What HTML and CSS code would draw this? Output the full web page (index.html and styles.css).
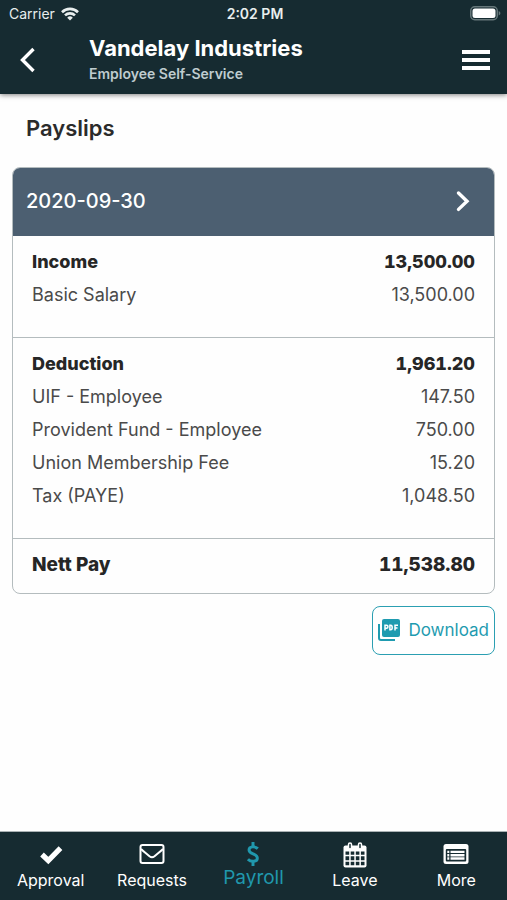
FILE: index.html
```html
<!DOCTYPE html>
<html lang="en">
<head>
<meta charset="UTF-8">
<meta name="viewport" content="width=device-width, initial-scale=1.0">
<title>Payslips</title>
<link rel="stylesheet" href="styles.css">
</head>
<body>

<header class="top">
  <div class="status-bar">
    <span class="carrier">
      Carrier
      <svg width="18" height="14" viewBox="0 0 18 14" fill="none" stroke="currentColor" stroke-width="2.6">
        <path d="M1 5.2a11.4 11.4 0 0 1 16 0"/>
        <path d="M4 8.4a7.2 7.2 0 0 1 10 0"/>
        <path d="M9 13.6 6.2 10.7a4 4 0 0 1 5.6 0z" fill="currentColor" stroke="none"/>
      </svg>
    </span>
    <span class="clock">2:02 PM</span>
    <span class="battery">
      <svg width="31" height="15" viewBox="0 0 31 15">
        <rect x="0.75" y="0.75" width="26.5" height="13" rx="4" fill="none" stroke="#66777a" stroke-width="1.5"/>
        <rect x="2.5" y="2.5" width="23" height="9.5" rx="2.5" fill="#fff"/>
        <path d="M28.7 5c2.2.8 2.2 3.7 0 4.5z" fill="#66777a"/>
      </svg>
    </span>
  </div>
  <div class="title-bar">
    <button class="icon-button" aria-label="Back">
      <svg width="16" height="26" viewBox="0 0 16 26" fill="none" stroke="currentColor" stroke-width="3.4">
        <path d="M13.5 2 2.5 13l11 11"/>
      </svg>
    </button>
    <div class="titles">
      <h1>Vandelay Industries</h1>
      <p>Employee Self-Service</p>
    </div>
    <button class="icon-button" aria-label="Menu">
      <svg width="30" height="20" viewBox="0 0 30 20" fill="currentColor">
        <path d="M1 0h28v4H1zM1 8h28v4H1zM1 16h28v4H1z"/>
      </svg>
    </button>
  </div>
</header>

<main>
  <h2>Payslips</h2>

  <section class="payslip">
    <button class="payslip-date">
      <span>2020-09-30</span>
      <svg width="14" height="22" viewBox="0 0 14 22" fill="none" stroke="currentColor" stroke-width="3.4" stroke-linecap="round">
        <path d="M2.5 3 11 11.2l-8.5 8.2"/>
      </svg>
    </button>
    <table>
      <tbody>
        <tr class="total"><th scope="row">Income</th><td>13,500.00</td></tr>
        <tr><th scope="row">Basic Salary</th><td>13,500.00</td></tr>
      </tbody>
      <tbody>
        <tr class="total"><th scope="row">Deduction</th><td>1,961.20</td></tr>
        <tr><th scope="row">UIF - Employee</th><td>147.50</td></tr>
        <tr><th scope="row">Provident Fund - Employee</th><td>750.00</td></tr>
        <tr><th scope="row">Union Membership Fee</th><td>15.20</td></tr>
        <tr><th scope="row">Tax (PAYE)</th><td>1,048.50</td></tr>
      </tbody>
      <tfoot>
        <tr class="total"><th scope="row">Nett Pay</th><td>11,538.80</td></tr>
      </tfoot>
    </table>
  </section>

  <button class="download">
    <svg width="22" height="22" viewBox="0 0 22 22">
      <path d="M1 5v14a2 2 0 0 0 2 2h14" fill="none" stroke="currentColor" stroke-width="2"/>
      <rect x="4" y="0" width="18" height="18" rx="2" fill="currentColor"/>
      <path d="M7 11.5V6.300h1.500a1.400 1.400 0 0 1 0 2.900H7M11.900 6.300v4.500h.8c2 0 2-4.500 0-4.500zM17 11.500V6.300h3M17 8.900h2.500" fill="none" stroke="#fff" stroke-width="1.5"/>
    </svg>
    Download
  </button>
</main>

<nav class="tabs">
  <a href="#approval">
    <svg width="24" height="24" viewBox="0 0 24 24" fill="none" stroke="currentColor" stroke-width="5.2">
      <path d="M3 12.5l6.3 6L21.5 6.2"/>
    </svg>
    Approval
  </a>
  <a href="#requests">
    <svg width="26" height="24" viewBox="0 0 26 24" fill="none" stroke="currentColor" stroke-width="2">
      <rect x="1.5" y="3" width="23" height="18" rx="2"/>
      <path d="M2 7c3 3 6 5 8.5 7.2 1.8 1.4 3.2 1.4 5 0C18 12 21 10 24 7"/>
    </svg>
    Requests
  </a>
  <a href="#payroll" class="active">
    <svg width="24" height="24" viewBox="0 0 24 26" fill="none" stroke="currentColor" stroke-width="3.2">
      <path d="M12 0v5M12 21v5"/>
      <path d="M17.2 7.2C14.5 4.5 7.7 4.3 7.7 8.7c0 5 9 3.300 9 8.600 0 4.700-7.200 4.500-10.200 1.400"/>
    </svg>
    Payroll
  </a>
  <a href="#leave">
    <svg width="24" height="26" viewBox="0 0 24 26">
      <rect x="0.5" y="3.5" width="23" height="22" rx="2" fill="currentColor"/>
      <path d="M2.5 9.5h3.7v3.3H2.5zM7.7 9.5h3.6v3.3H7.7zM12.8 9.5h3.6v3.3h-3.6zM17.9 9.5h3.6v3.3h-3.6zM2.5 14.2h3.7v4H2.5zM7.7 14.2h3.6v4H7.7zM12.8 14.2h3.6v4h-3.6zM17.9 14.2h3.6v4h-3.6zM2.5 19.7h3.7v3.6H2.5zM7.7 19.7h3.6v3.6H7.7zM12.8 19.7h3.6v3.6h-3.6zM17.9 19.7h3.6v3.6h-3.6z" fill="#162b31"/>
      <g fill="#162b31" stroke="currentColor" stroke-width="1.5">
        <rect x="5.5" y="1" width="3" height="6" rx="1.5"/>
        <rect x="15.5" y="1" width="3" height="6" rx="1.5"/>
      </g>
    </svg>
    Leave
  </a>
  <a href="#more">
    <svg width="26" height="24" viewBox="0 0 26 24">
      <rect x="0.5" y="2" width="25" height="20" rx="2.5" fill="currentColor"/>
      <rect x="2.8" y="7" width="20.4" height="12.5" rx="1" fill="#162b31"/>
      <path d="M4.3 8.7h2v2.4h-2zM7.5 8.7h14v2.4h-14zM4.3 12h2v2.4h-2zM7.5 12h14v2.4h-14zM4.3 15.3h2v2.4h-2zM7.5 15.3h14v2.4h-14z" fill="currentColor"/>
    </svg>
    More
  </a>
</nav>

</body>
</html>
```

FILE: styles.css
```css
* {
  box-sizing: border-box;
}

body {
  font-family: Inter, "Liberation Sans", sans-serif;
  margin: 0;
  min-height: 100vh;
  display: flex;
  flex-direction: column;
  background-color: #fefefe;
  color: #2b2b2b;
}

h1, h2, p {
  margin: 0;
}

button {
  font-family: inherit;
  cursor: pointer;
}

svg {
  display: block;
  flex-shrink: 0;
}

.top {
  background-color: #162b31;
  color: white;
  padding-bottom: 2px;
  box-shadow: 0 1px 5px rgba(0, 0, 0, 0.5);
}

.status-bar {
  display: grid;
  grid-template-columns: 1fr auto 1fr;
  align-items: center;
  height: 27px;
  padding: 0 6px 0 9px;
  font-size: 14px;
  color: #e8eeee;
}

.carrier {
  display: flex;
  align-items: center;
  gap: 6px;
}

.clock {
  font-weight: 600;
}

.battery {
  justify-self: end;
}

.title-bar {
  display: flex;
  align-items: center;
  height: 65px;
  padding: 0 16px 0 20px;
}

.icon-button {
  border: none;
  background: none;
  padding: 0;
  color: white;
}

.titles {
  flex: 1;
  margin-left: 53px;
}

.titles h1 {
  font-size: 22px;
  line-height: 28px;
  font-weight: 700;
}

.titles p {
  font-size: 14px;
  line-height: 24px;
  font-weight: 600;
  color: #bfcccf;
}

main {
  flex: 1;
  display: flex;
  flex-direction: column;
  padding: 20px 12px;
}

h2 {
  font-size: 22px;
  line-height: 28px;
  font-weight: 600;
  padding-left: 14px;
  margin-bottom: 25px;
}

.payslip {
  border: 1px solid #b4bcbe;
  border-radius: 8px;
  overflow: hidden;
}

.payslip-date {
  display: flex;
  align-items: center;
  justify-content: space-between;
  width: 100%;
  height: 68px;
  padding: 0 24px 2px 13px;
  border: none;
  background-color: #4c5f71;
  color: white;
  font-size: 20px;
  font-weight: 500;
}

table {
  width: 100%;
  border-collapse: collapse;
  font-size: 18px;
  line-height: 33px;
  color: #4a4a4a;
}

tbody {
  border-bottom: 1px solid #b4bcbe;
}

th, td {
  padding: 0 19px;
  font-weight: 400;
}

th {
  text-align: left;
}

td {
  text-align: right;
}

.total th, .total td {
  padding-top: 9px;
  font-weight: 800;
  color: #262626;
}

.total td {
  font-variant-numeric: tabular-nums;
}

tbody tr:last-child th, tbody tr:last-child td {
  padding-bottom: 26px;
}

tfoot {
  font-size: 19px;
}

tfoot th, tfoot td {
  padding-bottom: 12px;
}

.download {
  display: flex;
  align-items: center;
  align-self: flex-end;
  gap: 8px;
  height: 49px;
  margin-top: 12px;
  padding: 0 5px 2px;
  border: 1px solid #2b9fb2;
  border-radius: 8px;
  background-color: white;
  color: #1f9bb0;
  font-size: 17px;
}

.tabs {
  display: grid;
  grid-template-columns: repeat(5, 1fr);
  height: 69px;
  border-top: 1px solid #aab2b4;
  background-color: #162b31;
}

.tabs a {
  display: flex;
  flex-direction: column;
  align-items: center;
  justify-content: space-between;
  padding: 10px 0;
  font-size: 16px;
  line-height: 20px;
  color: white;
  text-decoration: none;
}

.tabs .active {
  padding-bottom: 12px;
  font-size: 19px;
  color: #2098ad;
}
```
